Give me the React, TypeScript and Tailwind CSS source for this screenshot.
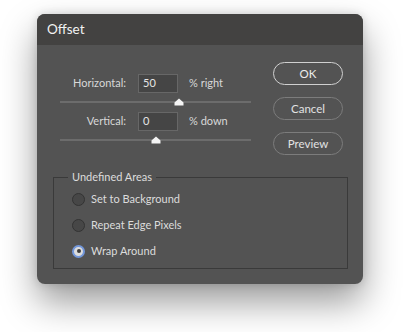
import { useState } from 'react'

const font = { fontFamily: 'Lato, "Segoe UI", sans-serif' }

function Slider({ pos }: { pos: number }) {
  return (
    <div className="relative h-[2px] w-[191px] bg-[#6c6c6c]">
      {/* thumb */}
      <svg
        className="absolute top-[-3px]"
        style={{ left: pos - 5 }}
        width="10"
        height="8"
        viewBox="0 0 10 8"
      >
        <path d="M5 0.5 L9.5 4.5 L9.5 7.5 L0.5 7.5 L0.5 4.5 Z" fill="#f4f4f4" />
      </svg>
    </div>
  )
}

function FieldRow({ label, value, unit }: { label: string; value: string; unit: string }) {
  return (
    <div className="flex h-[19px] items-center">
      <span className="w-[66px] text-right text-[11px] text-[#d8d8d8]">{label}</span>
      <div className="ml-[12px] flex h-[19px] w-[40px] items-center border border-[#676767] bg-[#454545] pl-[4px] text-[11px] text-[#e6e6e6]">
        {value}
      </div>
      <span className="ml-[11px] text-[11px] text-[#d8d8d8]">{unit}</span>
    </div>
  )
}

function Radio({ label, checked, onClick }: { label: string; checked: boolean; onClick: () => void }) {
  return (
    <button onClick={onClick} className="flex h-[26px] items-center text-left">
      {checked ? (
        <span className="flex h-[13px] w-[13px] items-center justify-center rounded-full border-2 border-[#7397da] bg-[#dcdcdc]">
          <span className="h-[4px] w-[4px] rounded-full bg-[#3c3c3c]" />
        </span>
      ) : (
        <span className="h-[13px] w-[13px] rounded-full border border-[#333333] bg-[#474747]" />
      )}
      <span className="ml-[6px] text-[11px] text-[#dcdcdc]">{label}</span>
    </button>
  )
}

export default function App() {
  const [mode, setMode] = useState(2)
  const options = ['Set to Background', 'Repeat Edge Pixels', 'Wrap Around']

  return (
    <div className="h-[332px] w-[406px] overflow-hidden bg-white pl-[37px] pt-[14px]" style={font}>
      <div className="h-[270px] w-[326px] overflow-hidden rounded-[8px] bg-[#535353] shadow-[0_18px_36px_rgba(0,0,0,0.4),0_0_10px_rgba(0,0,0,0.15)]">
        {/* Title bar */}
        <div className="flex h-[31px] items-center bg-[#434241] pl-[10px] text-[13.5px] text-[#f2f2f2]">
          Offset
        </div>

        <div className="flex flex-col">
          <div className="flex h-[110px]">
            {/* Fields + sliders */}
            <div className="flex w-[214px] flex-col pl-[23px] pt-[29px]">
              <FieldRow label="Horizontal:" value="50" unit="% right" />
              <div className="mt-[8px]">
                <Slider pos={119} />
              </div>
              <div className="mt-[9px]">
                <FieldRow label="Vertical:" value="0" unit="% down" />
              </div>
              <div className="mt-[8px]">
                <Slider pos={96} />
              </div>
            </div>

            {/* Buttons */}
            <div className="ml-[22px] flex flex-col gap-[12px] pt-[17px]">
              <button className="h-[23px] w-[70px] rounded-full border-[1.5px] border-[#d0d0d0] text-[11.5px] text-[#ececec]">
                OK
              </button>
              <button className="h-[23px] w-[70px] rounded-full border border-[#7c7c7c] text-[11.5px] text-[#e2e2e2]">
                Cancel
              </button>
              <button className="h-[23px] w-[70px] rounded-full border border-[#7c7c7c] text-[11.5px] text-[#e2e2e2]">
                Preview
              </button>
            </div>
          </div>

          {/* Undefined Areas group */}
          <div className="relative ml-[16px] mt-[22px] h-[92px] w-[295px] border border-[#3a3a3a]">
            <span className="absolute left-[14px] top-[-9px] bg-[#535353] px-[4px] text-[11px] leading-[16px] text-[#dcdcdc]">
              Undefined Areas
            </span>
            <div className="flex flex-col pl-[18px] pt-[8px]">
              {options.map((o, i) => (
                <Radio key={o} label={o} checked={mode === i} onClick={() => setMode(i)} />
              ))}
            </div>
          </div>
        </div>
      </div>
    </div>
  )
}
